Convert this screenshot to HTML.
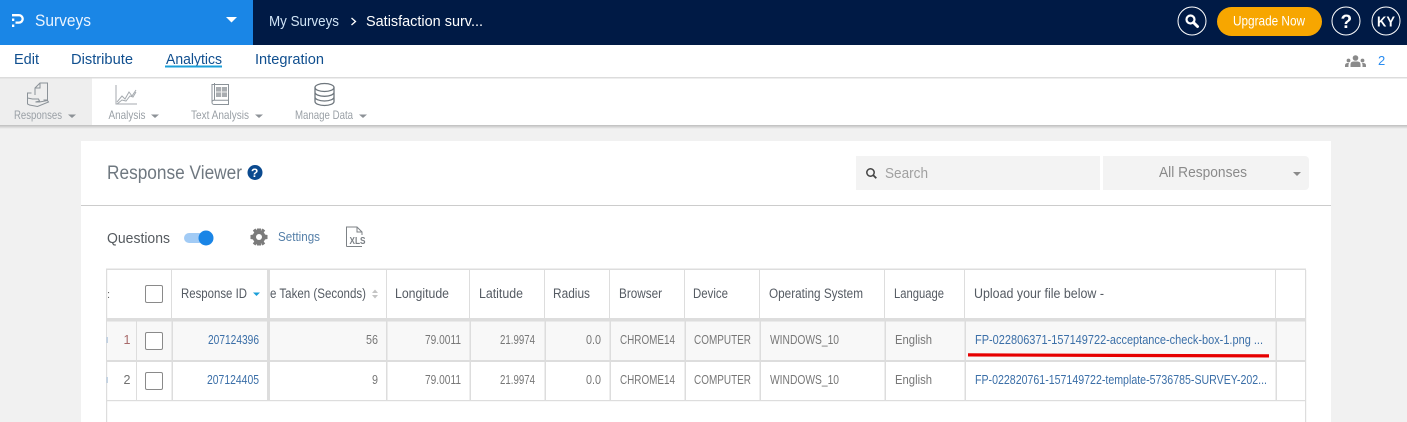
<!DOCTYPE html>
<html><head><meta charset="utf-8"><title>Surveys - Response Viewer</title>
<style>
html,body{margin:0;padding:0;width:1407px;height:422px;overflow:hidden;background:#f1f1f1}
svg{display:block}
text{font-family:"Liberation Sans",Arial,sans-serif;white-space:pre}
.h{font-size:13.5px;fill:#555b63}
.c{font-size:13px;fill:#777777}
.l{font-size:13px;fill:#3b6fa8}
.t{font-size:15px;fill:#104f8f}
.m{font-size:12px;fill:#9aa0a6}
</style></head><body>
<svg width="1407" height="422" viewBox="0 0 1407 422" xmlns="http://www.w3.org/2000/svg">
<defs><linearGradient id="sh" x1="0" y1="0" x2="0" y2="1"><stop offset="0" stop-color="#bdbdbd"/><stop offset="1" stop-color="#f1f1f1"/></linearGradient></defs>
<rect width="1407" height="422" fill="#f1f1f1"/>
<!-- top bar -->
<rect width="1407" height="45" fill="#001a45"/>
<rect width="253" height="45" fill="#1a86e6"/>
<path d="M12 15.200h7a3.700 3.700 0 0 1 0 7.400H15.500" fill="none" stroke="#fff" stroke-width="2.300"/>
<rect x="12" y="18.500" width="2.300" height="2.500" fill="#fff"/><rect x="12" y="24.500" width="2.300" height="2.500" fill="#fff"/>
<text x="35" y="26" font-size="17" fill="#eaf4ff" textLength="56" lengthAdjust="spacingAndGlyphs">Surveys</text>
<path d="M226 17h11l-5.500 5.500z" fill="#fff"/>
<text x="269" y="26" font-size="15" fill="#cfe3f5" textLength="70" lengthAdjust="spacingAndGlyphs">My Surveys</text>
<path d="M351.500 18l4 3.500-4 3.500" fill="none" stroke="#fff" stroke-width="1.300"/>
<text x="366" y="26" font-size="15" fill="#fff" textLength="117" lengthAdjust="spacingAndGlyphs">Satisfaction surv...</text>
<circle cx="1192" cy="21" r="14" fill="none" stroke="#fff" stroke-width="1"/>
<circle cx="1190.500" cy="19.500" r="4" fill="none" stroke="#fff" stroke-width="2.200"/>
<path d="M1193.500 22.500l4 4" stroke="#fff" stroke-width="3" stroke-linecap="round"/>
<rect x="1217" y="7" width="105" height="29" rx="14.500" fill="#f7a600"/>
<text x="1233" y="25.500" font-size="14" fill="#fff" textLength="72" lengthAdjust="spacingAndGlyphs">Upgrade Now</text>
<circle cx="1346" cy="21" r="14" fill="none" stroke="#fff" stroke-width="1"/>
<text x="1340.500" y="28" font-size="19" font-weight="700" fill="#fff">?</text>
<circle cx="1386" cy="21" r="14" fill="none" stroke="#fff" stroke-width="1"/>
<text x="1377" y="26.500" font-size="14.500" font-weight="700" fill="#fff" textLength="18" lengthAdjust="spacingAndGlyphs">KY</text>
<!-- tabs -->
<rect y="45" width="1407" height="33" fill="#fff"/>
<rect y="77" width="1407" height="1.500" fill="#dcdcdc"/>
<text class="t" x="14" y="64" textLength="25" lengthAdjust="spacingAndGlyphs">Edit</text>
<text class="t" x="71" y="64" textLength="62" lengthAdjust="spacingAndGlyphs">Distribute</text>
<text class="t" x="166" y="64" textLength="56" lengthAdjust="spacingAndGlyphs">Analytics</text>
<rect x="165" y="65.500" width="57" height="2" fill="#1b9fd8"/>
<text class="t" x="255" y="64" textLength="69" lengthAdjust="spacingAndGlyphs">Integration</text>
<g fill="#8a8a8a"><circle cx="1355.500" cy="58" r="2.800"/><path d="M1350.500 67v-2.500q0-3 3-3h4q3 0 3 3V67z"/><circle cx="1348.500" cy="60.500" r="1.900"/><path d="M1345 67v-1.500q0-2.500 3-2.500h1q-.5 1-.5 2v2z"/><circle cx="1362.500" cy="60.500" r="1.900"/><path d="M1366 67v-1.500q0-2.500-3-2.500h-1q.5 1 .5 2v2z"/></g>
<text x="1378" y="65" font-size="13" fill="#2a8cf0">2</text>
<!-- toolbar -->
<rect y="78.500" width="1407" height="47" fill="#fff"/>
<rect y="78.500" width="92" height="47" fill="#eeeeee"/>
<rect y="125" width="1407" height="4" fill="url(#sh)"/>
<g fill="none" stroke="#8b9298" stroke-width="1">
<path d="M35 95V88l5-5h7.500v17h-4M35 88h5v-5"/>
<path d="M27.500 98v6l2 1 8 1.500 11-4.500-1-1.500-8 1.500h-4l4-1-1-2h-6z"/><path d="M27.500 98v-5h4"/>
<path d="M116 85v19h21" stroke="#a5aaaf"/><path d="M117 102l5-6 3 3 4-7 3 4 4-6M117 104l5-4 4 1 4-5 3 1 3-5" stroke="#a5aaaf"/>
<path d="M212 84.500h16.500v20H214a2 2 0 0 1-2-2v-18zM212 102a2 2 0 0 1 2-1.800h14.500M214.500 83l0 17"/>
<rect x="216" y="87" width="11" height="10" fill="#a9adb1" stroke="none"/>
<path d="M221.500 87v10M216 92h11" stroke="#eee"/>
<ellipse cx="324.500" cy="87.500" rx="9.500" ry="4" stroke="#6e767d" stroke-width="1.300"/>
<path d="M315 87.500v14c0 2.200 4.200 4 9.500 4s9.500-1.800 9.500-4v-14M315 92.300c0 2.200 4.200 4 9.500 4s9.500-1.800 9.500-4M315 97c0 2.200 4.200 4 9.500 4s9.500-1.800 9.500-4" stroke="#6e767d" stroke-width="1.300"/>
</g>
<text class="m" x="14" y="119" textLength="48" lengthAdjust="spacingAndGlyphs">Responses</text>
<path d="M68 114.500h8l-4 3.500z" fill="#8d9297"/>
<text class="m" x="108.500" y="119" textLength="37" lengthAdjust="spacingAndGlyphs">Analysis</text>
<path d="M151 114.500h8l-4 3.500z" fill="#8d9297"/>
<text class="m" x="191" y="119" textLength="58" lengthAdjust="spacingAndGlyphs">Text Analysis</text>
<path d="M255 114.500h8l-4 3.500z" fill="#8d9297"/>
<text class="m" x="295" y="119" textLength="58" lengthAdjust="spacingAndGlyphs">Manage Data</text>
<path d="M359 114.500h8l-4 3.500z" fill="#8d9297"/>
<!-- card -->
<rect x="81" y="141" width="1250" height="281" fill="#fff"/>
<text x="107" y="179" font-size="19" fill="#6f7880" textLength="135" lengthAdjust="spacingAndGlyphs">Response Viewer</text>
<circle cx="255" cy="172.500" r="7.500" fill="#0b4a8f"/>
<text x="251" y="177" font-size="12" font-weight="700" fill="#fff">?</text>
<rect x="856" y="156" width="244" height="34" fill="#f3f3f3"/>
<path d="M1103 156h202a4 4 0 0 1 4 4v26a4 4 0 0 1-4 4h-202z" fill="#f3f3f3"/>
<circle cx="870.500" cy="172.500" r="3.700" fill="none" stroke="#444" stroke-width="1.500"/>
<path d="M873.300 175.300l3 3" stroke="#444" stroke-width="1.800"/>
<text x="885" y="178" font-size="15" fill="#a0a0a0" textLength="43" lengthAdjust="spacingAndGlyphs">Search</text>
<text x="1159" y="177" font-size="15" fill="#8a8a8a" textLength="88" lengthAdjust="spacingAndGlyphs">All Responses</text>
<path d="M1293 172h8l-4 4z" fill="#8a8a8a"/>
<rect x="81" y="205" width="1250" height="1" fill="#cccccc"/>
<text x="107" y="243" font-size="15" fill="#555a5f" textLength="63" lengthAdjust="spacingAndGlyphs">Questions</text>
<rect x="184" y="233" width="28" height="10" rx="5" fill="#a2cbf5"/>
<circle cx="206" cy="238" r="7.500" fill="#1a85e6"/>
<g fill="#7b7b7b"><circle cx="259" cy="237" r="6.500"/>
<path d="M257 228.500h4l.5 3h-5zM257 245.500h4l.5-3h-5zM250.500 235v4l3 .5v-5zM267.500 235v4l-3 .5v-5zM252.800 230.500l2.600-2 2 2.500-2.800 2zM265.200 243.500l-2.600 2-2-2.500 2.800-2zM265.200 230.500l-2.600-2-2 2.500 2.800 2zM252.800 243.500l2.600 2 2-2.500-2.800-2z"/></g>
<circle cx="259" cy="237" r="3" fill="#fff"/>
<text x="278" y="241" font-size="13" fill="#557fa8" textLength="42" lengthAdjust="spacingAndGlyphs">Settings</text>
<path d="M346.500 246.500v-19.500h10.500l5 5v3M346.500 246.500h15.500M357 227v5h5" fill="none" stroke="#7d8286" stroke-width="1"/>
<text x="349.500" y="244" font-size="10" font-weight="700" fill="#7a7f84" textLength="16" lengthAdjust="spacingAndGlyphs">XLS</text>
<!-- table -->
<rect x="106" y="268.500" width="1200" height="1.500" fill="#dddddd"/>
<rect x="106" y="270" width="1.200" height="152" fill="#dddddd"/>
<rect x="1305" y="270" width="1.200" height="152" fill="#dddddd"/>
<rect x="107" y="321" width="1198" height="39.500" fill="#f8f8f8"/>
<rect x="106" y="318" width="1200" height="3.500" fill="#dddddd"/>
<rect x="106" y="360" width="1200" height="2" fill="#dddddd"/>
<rect x="106" y="400" width="1200" height="1.200" fill="#dddddd"/>
<g fill="#dddddd">
<rect x="171" y="270" width="1" height="48"/><rect x="267" y="270" width="3" height="131"/><rect x="386" y="270" width="1" height="48"/><rect x="469" y="270" width="1" height="48"/><rect x="544" y="270" width="1" height="48"/><rect x="609" y="270" width="1" height="48"/><rect x="684" y="270" width="1" height="48"/><rect x="759" y="270" width="1" height="48"/><rect x="884" y="270" width="1" height="48"/><rect x="964" y="270" width="1" height="48"/><rect x="1275" y="270" width="1" height="48"/>
<rect x="136" y="321" width="1" height="80"/><rect x="171.500" y="321" width="1.500" height="80"/><rect x="386" y="321" width="1.500" height="80"/><rect x="469.500" y="321" width="1.500" height="80"/><rect x="544.500" y="321" width="1.500" height="80"/><rect x="609.500" y="321" width="1.500" height="80"/><rect x="684.500" y="321" width="1.500" height="80"/><rect x="759.500" y="321" width="1.500" height="80"/><rect x="884.500" y="321" width="1.500" height="80"/><rect x="964.500" y="321" width="1.500" height="80"/><rect x="1275.500" y="321" width="1.500" height="80"/>
</g>
<!-- checkboxes -->
<g fill="#fff" stroke="#8a8a8a" stroke-width="1"><rect x="145.500" y="285.500" width="17" height="17" rx="1.500"/><rect x="145.500" y="332.500" width="17" height="17" rx="1.500"/><rect x="145.500" y="372.500" width="17" height="17" rx="1.500"/></g>
<!-- header text -->
<text x="107" y="298" font-size="11" fill="#666">:</text>
<text class="h" x="181" y="298" textLength="66" lengthAdjust="spacingAndGlyphs">Response ID</text>
<path d="M253 292.500h7l-3.500 3.500z" fill="#1b9fd8"/>
<text class="h" x="270" y="298" textLength="96" lengthAdjust="spacingAndGlyphs">e Taken (Seconds)</text>
<path d="M372 293l3-3.500 3 3.500zM372 295l3 3.500 3-3.500z" fill="#c4c4c4"/>
<text class="h" x="395" y="298" textLength="54" lengthAdjust="spacingAndGlyphs">Longitude</text>
<text class="h" x="479" y="298" textLength="44" lengthAdjust="spacingAndGlyphs">Latitude</text>
<text class="h" x="553" y="298" textLength="37" lengthAdjust="spacingAndGlyphs">Radius</text>
<text class="h" x="619" y="298" textLength="43" lengthAdjust="spacingAndGlyphs">Browser</text>
<text class="h" x="693" y="298" textLength="35" lengthAdjust="spacingAndGlyphs">Device</text>
<text class="h" x="769" y="298" textLength="94" lengthAdjust="spacingAndGlyphs">Operating System</text>
<text class="h" x="894" y="298" textLength="50" lengthAdjust="spacingAndGlyphs">Language</text>
<text class="h" x="974" y="298" textLength="130" lengthAdjust="spacingAndGlyphs">Upload your file below -</text>
<!-- row 1 -->
<text x="123.500" y="344" font-size="12.500" fill="#a86a6a">1</text>
<text class="l" x="208" y="344" textLength="51" lengthAdjust="spacingAndGlyphs">207124396</text>
<text class="c" x="366" y="344" textLength="12" lengthAdjust="spacingAndGlyphs">56</text>
<text class="c" x="425" y="344" textLength="36" lengthAdjust="spacingAndGlyphs">79.0011</text>
<text class="c" x="500" y="344" textLength="35" lengthAdjust="spacingAndGlyphs">21.9974</text>
<text class="c" x="586" y="344" textLength="15" lengthAdjust="spacingAndGlyphs">0.0</text>
<text class="c" x="620" y="344" textLength="55" lengthAdjust="spacingAndGlyphs">CHROME14</text>
<text class="c" x="694" y="344" textLength="57" lengthAdjust="spacingAndGlyphs">COMPUTER</text>
<text class="c" x="770" y="344" textLength="69" lengthAdjust="spacingAndGlyphs">WINDOWS_10</text>
<text class="c" x="895" y="344" textLength="37" lengthAdjust="spacingAndGlyphs">English</text>
<text class="l" x="975" y="344" textLength="288" lengthAdjust="spacingAndGlyphs">FP-022806371-157149722-acceptance-check-box-1.png ...</text>
<path d="M968 353.300L1269 354.300v3.200L968 356.500z" fill="#e60000"/>
<!-- row 2 -->
<text x="123.500" y="384" font-size="12.500" fill="#707070">2</text>
<text class="l" x="207" y="384" textLength="52" lengthAdjust="spacingAndGlyphs">207124405</text>
<text class="c" x="372" y="384" textLength="6" lengthAdjust="spacingAndGlyphs">9</text>
<text class="c" x="425" y="384" textLength="36" lengthAdjust="spacingAndGlyphs">79.0011</text>
<text class="c" x="500" y="384" textLength="35" lengthAdjust="spacingAndGlyphs">21.9974</text>
<text class="c" x="586" y="384" textLength="15" lengthAdjust="spacingAndGlyphs">0.0</text>
<text class="c" x="620" y="384" textLength="55" lengthAdjust="spacingAndGlyphs">CHROME14</text>
<text class="c" x="694" y="384" textLength="57" lengthAdjust="spacingAndGlyphs">COMPUTER</text>
<text class="c" x="770" y="384" textLength="69" lengthAdjust="spacingAndGlyphs">WINDOWS_10</text>
<text class="c" x="895" y="384" textLength="37" lengthAdjust="spacingAndGlyphs">English</text>
<text class="l" x="975" y="384" textLength="292" lengthAdjust="spacingAndGlyphs">FP-022820761-157149722-template-5736785-SURVEY-202...</text>
<!-- clipped stub chars -->
<rect x="106.500" y="337" width="1.300" height="6" fill="#b5c9de"/>
<rect x="106.500" y="377" width="1.300" height="6" fill="#b5c9de"/>
</svg>
</body></html>
